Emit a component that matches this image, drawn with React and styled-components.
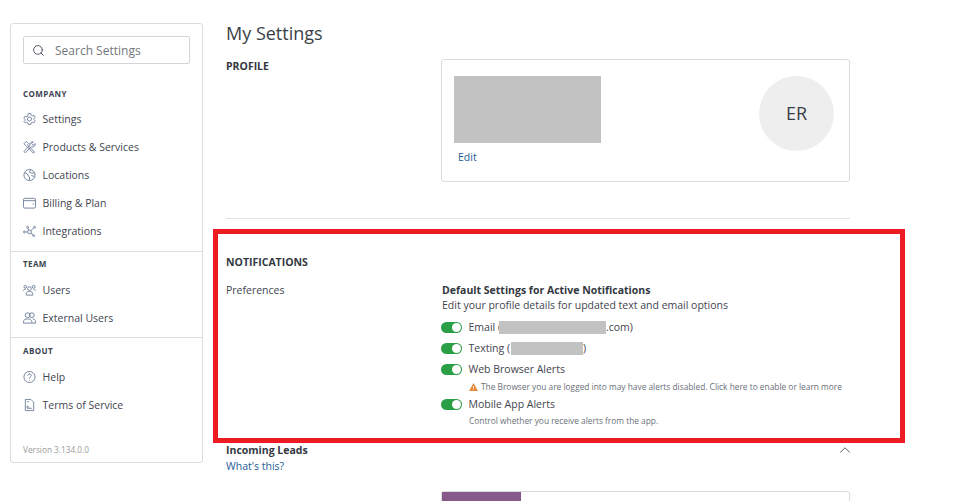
import React from 'react';
import styled, { createGlobalStyle } from 'styled-components';
import { ChevronUp, Search } from 'lucide-react';

const GlobalStyle = createGlobalStyle`
  html, body {
    margin: 0;
    padding: 0;
    background: #fff;
    height: 501px;
    overflow: hidden;
    font-family: "Open Sans", "Liberation Sans", sans-serif;
    color: #33383f;
  }
`;

const Page = styled.div`
  position: relative;
  display: flex;
  align-items: flex-start;
  height: 501px;
  padding-left: 10px;
  box-sizing: border-box;
  overflow: hidden;
`;

const Sidebar = styled.aside`
  width: 193px;
  height: 440px;
  margin-top: 23px;
  box-sizing: border-box;
  border: 1px solid #dcdcdc;
  border-radius: 3px;
  display: flex;
  flex-direction: column;
  flex-shrink: 0;
`;

const SearchBox = styled.div`
  display: flex;
  align-items: center;
  gap: 10px;
  height: 28px;
  margin: 12px 12px 0 12px;
  padding-left: 8px;
  box-sizing: border-box;
  border: 1px solid #d3d5da;
  border-radius: 2px;
  font-size: 12px;
  color: #73777d;
`;

const NavGroup = styled.div`
  padding: ${(p) => p.$top}px 12px ${(p) => p.$bottom}px;
  border-bottom: ${(p) => (p.$divider ? '1px solid #dfdfdf' : 'none')};
`;

const GroupTitle = styled.div`
  font-size: 8px;
  font-weight: 700;
  line-height: 11px;
  letter-spacing: 0.4px;
  color: #3c4350;
  margin-bottom: ${(p) => p.$gap}px;
`;

const NavItem = styled.div`
  display: flex;
  align-items: center;
  gap: 6.5px;
  height: 28px;
  font-size: 10.5px;
  color: #3f4550;
`;

const NavIcon = styled.svg`
  width: 13px;
  height: 14px;
  flex-shrink: 0;
  fill: none;
  stroke: #6f7f9c;
  stroke-width: 1;
`;

const Version = styled.div`
  margin: auto 12px 7px;
  font-size: 8.25px;
  line-height: 11px;
  color: #9a9a9a;
`;

const Main = styled.main`
  width: 624px;
  margin-left: 23px;
  flex-shrink: 0;
`;

const Title = styled.h1`
  margin: 21px 0 0;
  font-size: 18px;
  font-weight: 400;
  line-height: 24px;
  color: #3a3f47;
`;

const ProfileRow = styled.section`
  display: flex;
  align-items: flex-start;
  margin-top: 14px;
  padding-bottom: 36px;
  border-bottom: 1px solid #e3e3e3;
`;

const SectionLabel = styled.div`
  width: 215px;
  flex-shrink: 0;
  font-size: 10.5px;
  font-weight: 700;
  line-height: 14px;
  color: #33383f;
`;

const ProfileCard = styled.div`
  width: 409px;
  height: 123px;
  box-sizing: border-box;
  border: 1px solid #dcdcdc;
  border-radius: 3px;
  padding: 16px 15px 0 12px;
  display: flex;
  justify-content: space-between;
`;

const ProfilePhoto = styled.div`
  width: 147px;
  height: 67px;
  background: #c2c2c2;
`;

const TextLink = styled.a`
  display: block;
  font-size: 10.5px;
  line-height: 16px;
  color: #1d5c96;
`;

const EditLink = styled(TextLink)`
  margin: 6px 0 0 4px;
`;

const Avatar = styled.div`
  width: 75px;
  height: 75px;
  padding-bottom: 2px;
  box-sizing: border-box;
  border-radius: 50%;
  background: #eeeeee;
  display: flex;
  align-items: center;
  justify-content: center;
  font-size: 18px;
  color: #3a3f47;
`;

const Notifications = styled.section`
  padding-top: 36px;
`;

const NotificationsTitle = styled(SectionLabel)`
  width: auto;
`;

const PrefsRow = styled.div`
  display: flex;
  margin-top: 14px;
`;

const PrefsLabel = styled.div`
  width: 216px;
  flex-shrink: 0;
  font-size: 10.5px;
  line-height: 15px;
  color: #3f4550;
`;

const PrefsTitle = styled.div`
  font-size: 10.5px;
  font-weight: 700;
  line-height: 15px;
  color: #33383f;
`;

const PrefsDesc = styled.div`
  font-size: 10.5px;
  line-height: 15px;
  color: #3f4550;
  margin-bottom: 3px;
`;

const ToggleRow = styled.div`
  display: flex;
  align-items: center;
  gap: 6.5px;
  height: 21px;
  margin-left: -1px;
  font-size: 10.5px;
  color: #3f4550;
`;

const Toggle = styled.span`
  position: relative;
  width: 21px;
  height: 11px;
  margin-top: 2px;
  border-radius: 6px;
  background: #2b9f46;
  flex-shrink: 0;
  &::after {
    content: '';
    position: absolute;
    top: 1px;
    right: 1px;
    width: 9px;
    height: 9px;
    border-radius: 50%;
    background: #fff;
  }
`;

const Redacted = styled.span`
  display: inline-block;
  width: ${(p) => p.$width}px;
  height: 13px;
  margin-left: ${(p) => p.$shift}px;
  background: #c2c2c2;
  vertical-align: -3px;
`;

const Hint = styled.div`
  display: flex;
  align-items: center;
  gap: 3px;
  margin-left: 27px;
  font-size: 8.35px;
  line-height: 11px;
  color: #6a6f78;
`;

const WarningHint = styled(Hint)`
  margin-top: 2px;
  margin-bottom: 1px;
`;

const ControlHint = styled(Hint)`
  margin-top: 1px;
`;

const Leads = styled.section`
  display: flex;
  justify-content: space-between;
  margin-top: 17px;
`;

const LeadsTitle = styled.div`
  font-size: 10.5px;
  font-weight: 700;
  line-height: 15px;
  color: #33383f;
`;

const Chevron = styled(ChevronUp)`
  margin: -2px -4px 0 0;
`;

const LeadsCard = styled.div`
  width: 409px;
  height: 40px;
  margin: 17px 0 0 215px;
  box-sizing: border-box;
  border: 1px solid #dcdcdc;
  border-radius: 3px;
`;

const LeadsTab = styled.div`
  width: 79px;
  height: 100%;
  background: #87598b;
`;

const Annotation = styled.div`
  position: absolute;
  left: 213px;
  top: 229px;
  width: 692px;
  height: 214px;
  box-sizing: border-box;
  border: 5px solid #ed1c24;
  pointer-events: none;
`;

const GearIcon = () => (
  <NavIcon viewBox="0 0 14 14">
    <path d="M5.7 1h2.6l.4 1.700 1.400.8 1.700-.5 1.200 2.200-1.200 1.300v1l1.200 1.300-1.200 2.200-1.700-.5-1.400.8-.4 1.600H5.700l-.4-1.600-1.400-.8-1.700.5L1 9.800l1.200-1.300v-1L1 6.200 2.200 4l1.700.5 1.400-.8z" />
    <circle cx="7" cy="7" r="2.2" />
  </NavIcon>
);

const ToolsIcon = () => (
  <NavIcon viewBox="0 0 14 14">
    <path d="M1 3.500 3.500 1 6 3.500 4.800 4.700l7.700 7.800-1.200 1.200-7.700-7.800L3.500 6z" />
    <path d="M13 3.200 11 5.200 9.200 3.500l2-2a3 3 0 0 0-3.700 3.800L1.600 11a1 1 0 0 0 1.600 1.600l5.700-5.800A3 3 0 0 0 13 3.200z" />
  </NavIcon>
);

const GlobeIcon = () => (
  <NavIcon viewBox="0 0 14 14">
    <circle cx="7" cy="7" r="6" />
    <path d="M2 4.500 5 6l.5 2L7 9v3.500M8 1.500 7 4l2.500 1L12 4.500M9 7.500l1.500.5 2 .5" />
  </NavIcon>
);

const BillingIcon = () => (
  <NavIcon viewBox="0 0 14 14">
    <rect x="0.5" y="2" width="13" height="10.5" rx="1.5" />
    <path d="M.5 4.500h13M10.500 8h1.500" />
  </NavIcon>
);

const IntegrationsIcon = () => (
  <NavIcon viewBox="0 0 14 14">
    <circle cx="1.5" cy="8" r="1" />
    <circle cx="5" cy="3" r="1" />
    <circle cx="7" cy="8" r="2" />
    <circle cx="12.5" cy="3" r="1" />
    <circle cx="11.5" cy="12" r="1" />
    <path d="M2.500 8H5M5.300 4l1 2.200M8.500 6.600l3.200-3M8.500 9.400l2.300 1.900" />
  </NavIcon>
);

const UsersIcon = () => (
  <NavIcon viewBox="0 0 14 14">
    <circle cx="2.5" cy="3.5" r="1.5" />
    <circle cx="11.5" cy="3.5" r="1.5" />
    <circle cx="7" cy="5.5" r="2" />
    <path d="M.5 8c0-1.200 1-2 2.500-2M13.500 8c0-1.200-1-2-2.500-2M3.500 12.500V11c0-1.500 1.500-2.500 3.500-2.500s3.500 1 3.500 2.500v1.500z" />
  </NavIcon>
);

const ExternalUsersIcon = () => (
  <NavIcon viewBox="0 0 14 14">
    <circle cx="5" cy="4" r="2.6" />
    <circle cx="9.5" cy="4" r="2.6" />
    <path d="M.5 12.500V11c0-2 2-3 4.500-3s4.500 1 4.500 3v1.500zM10.500 8c1.800 0 3 1 3 3v1.500h-4" />
  </NavIcon>
);

const HelpIcon = () => (
  <NavIcon viewBox="0 0 14 14">
    <circle cx="7" cy="7" r="6" />
    <path d="M5.200 5.500a1.800 1.800 0 1 1 2.600 1.600c-.6.3-.8.700-.8 1.400M7 10v.8" />
  </NavIcon>
);

const TermsIcon = () => (
  <NavIcon viewBox="0 0 14 14">
    <path d="M2.500 1h6l3 3v9h-9z" />
    <path d="M4.500 3.500h2M4.500 8v2.500h5M4.500 8l2 1.500" />
  </NavIcon>
);

const WarningIcon = () => (
  <svg width="9" height="8" viewBox="0 0 9 8">
    <path d="M4.500 0 9 8H0z" fill="#e58a3c" />
    <path d="M4.500 3v2.500M4.500 6.200v.7" stroke="#fff" strokeWidth="0.8" />
  </svg>
);

const navGroups = [
  {
    title: 'COMPANY',
    top: 24,
    gap: 6,
    bottom: 6,
    items: [
      { label: 'Settings', icon: GearIcon },
      { label: 'Products & Services', icon: ToolsIcon },
      { label: 'Locations', icon: GlobeIcon },
      { label: 'Billing & Plan', icon: BillingIcon },
      { label: 'Integrations', icon: IntegrationsIcon },
    ],
  },
  {
    title: 'TEAM',
    top: 6,
    gap: 7,
    bottom: 5,
    items: [
      { label: 'Users', icon: UsersIcon },
      { label: 'External Users', icon: ExternalUsersIcon },
    ],
  },
  {
    title: 'ABOUT',
    top: 7,
    gap: 7,
    bottom: 0,
    items: [
      { label: 'Help', icon: HelpIcon },
      { label: 'Terms of Service', icon: TermsIcon },
    ],
  },
];

const App = () => (
  <>
    <GlobalStyle />
    <Page>
      <Sidebar>
        <SearchBox>
          <Search size={13} color="#3c4350" strokeWidth={1.6} />
          Search Settings
        </SearchBox>
        {navGroups.map((group, index) => (
          <NavGroup
            key={group.title}
            $top={group.top}
            $bottom={group.bottom}
            $divider={index < navGroups.length - 1}
          >
            <GroupTitle $gap={group.gap}>{group.title}</GroupTitle>
            {group.items.map(({ label, icon: Icon }) => (
              <NavItem key={label}>
                <Icon />
                {label}
              </NavItem>
            ))}
          </NavGroup>
        ))}
        <Version>Version 3.134.0.0</Version>
      </Sidebar>
      <Main>
        <Title>My Settings</Title>
        <ProfileRow>
          <SectionLabel>PROFILE</SectionLabel>
          <ProfileCard>
            <div>
              <ProfilePhoto />
              <EditLink>Edit</EditLink>
            </div>
            <Avatar>ER</Avatar>
          </ProfileCard>
        </ProfileRow>
        <Notifications>
          <NotificationsTitle>NOTIFICATIONS</NotificationsTitle>
          <PrefsRow>
            <PrefsLabel>Preferences</PrefsLabel>
            <div>
              <PrefsTitle>Default Settings for Active Notifications</PrefsTitle>
              <PrefsDesc>Edit your profile details for updated text and email options</PrefsDesc>
              <ToggleRow>
                <Toggle />
                <span>Email (<Redacted $width={107} $shift={-2} />.com)</span>
              </ToggleRow>
              <ToggleRow>
                <Toggle />
                <span>Texting (<Redacted $width={72} $shift={1} />)</span>
              </ToggleRow>
              <ToggleRow>
                <Toggle />
                <span>Web Browser Alerts</span>
              </ToggleRow>
              <WarningHint>
                <WarningIcon />
                The Browser you are logged into may have alerts disabled. Click here to enable or learn more
              </WarningHint>
              <ToggleRow>
                <Toggle />
                <span>Mobile App Alerts</span>
              </ToggleRow>
              <ControlHint>Control whether you receive alerts from the app.</ControlHint>
            </div>
          </PrefsRow>
        </Notifications>
        <Leads>
          <div>
            <LeadsTitle>Incoming Leads</LeadsTitle>
            <TextLink>What's this?</TextLink>
          </div>
          <Chevron size={18} color="#33383f" strokeWidth={1.1} />
        </Leads>
        <LeadsCard>
          <LeadsTab />
        </LeadsCard>
      </Main>
      <Annotation />
    </Page>
  </>
);

export default App;
